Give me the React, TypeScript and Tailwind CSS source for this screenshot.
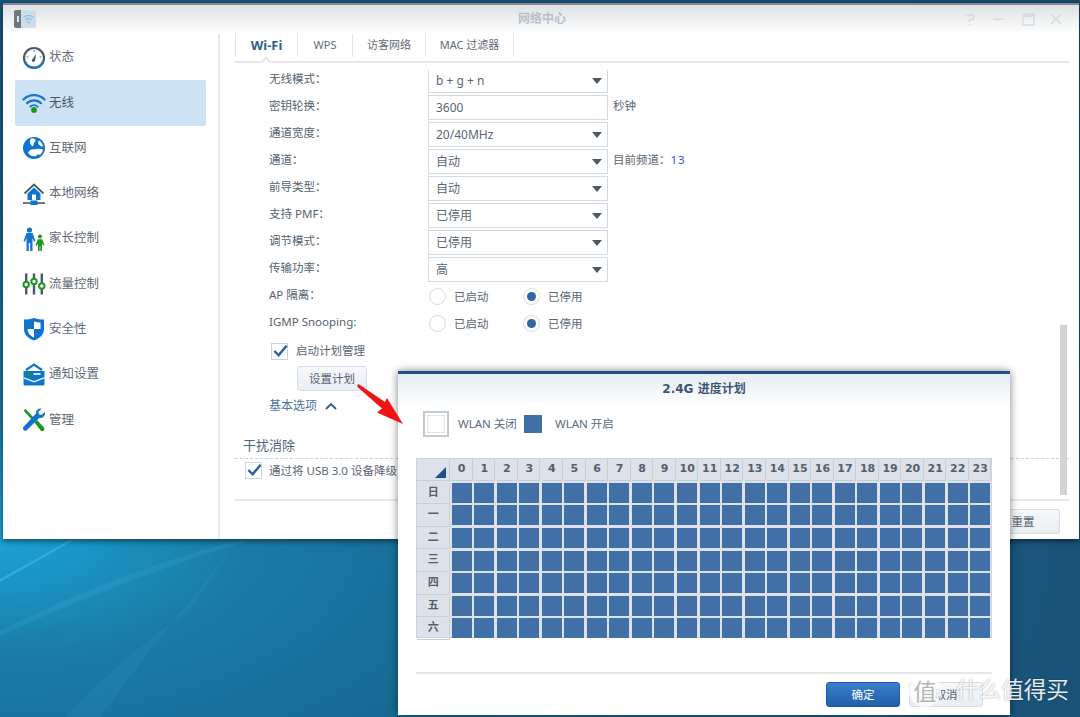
import React from 'react'

const hours = Array.from({ length: 24 }, (_, i) => i)
const days = ['日', '一', '二', '三', '四', '五', '六']

const StatusIcon = () => (
  <svg viewBox="0 0 24 24" className="w-[24px] h-[24px]">
    <circle cx="12" cy="12" r="10" fill="#fff" stroke="#4b5966" strokeWidth="2.2" />
    <path d="M3 16a10 10 0 0 0 18 0" fill="none" stroke="#1b76c9" strokeWidth="2.2" />
    <path d="M9.6 14.6 14 7.8l-1 7.2a1.9 1.9 0 0 1-3.4-.4z" fill="#4b5966" />
    <circle cx="12" cy="5" r="1" fill="#9aa5b0" />
    <circle cx="5.5" cy="11" r="1" fill="#9aa5b0" />
    <circle cx="18.5" cy="11" r="1" fill="#9aa5b0" />
  </svg>
)

const WifiIcon = () => (
  <svg viewBox="0 0 24 24" className="w-[24px] h-[24px]">
    <path d="M1.5 8.5a15 15 0 0 1 21 0" fill="none" stroke="#1b76c9" strokeWidth="2.2" strokeLinecap="round" />
    <path d="M5 12.2a10 10 0 0 1 14 0" fill="none" stroke="#1b76c9" strokeWidth="2.2" strokeLinecap="round" />
    <path d="M8.4 15.6a5.2 5.2 0 0 1 7.2 0" fill="none" stroke="#1b76c9" strokeWidth="2" strokeLinecap="round" />
    <circle cx="12" cy="19" r="2.9" fill="#1f961f" />
  </svg>
)

const GlobeIcon = () => (
  <svg viewBox="0 0 24 24" className="w-[24px] h-[24px]">
    <circle cx="12" cy="12" r="11" fill="#0f74cc" />
    <path d="M9 2.500c2-.3 4 0 4.500 1.200.5 1.300-1 2-1.500 3.300-.4 1.200-.3 3-1.500 3.300-1.100.200-1-1.500-2-2.300C7.500 7 7.800 4 9 2.500z" fill="#fff" />
    <path d="M16.500 4.500c2 .8 4 3 4.500 5.500-1 1-2.300.6-3-.5-.9-.8-2.500-1.300-1.500-5z" fill="#fff" />
    <path d="M6 17c1-3 4-4.500 6.500-3.500 1.500-1 5-1.300 8.500 0-.3 2.300-1.500 4-3 5.500-1.500-.8-3-.3-4 1-2.800 1-6-.5-8-3z" fill="#fff" />
  </svg>
)

const HomeIcon = () => (
  <svg viewBox="0 0 24 24" className="w-[24px] h-[24px]">
    <path d="M2.500 11.500 12 2.500l9.500 9" fill="none" stroke="#4b5966" strokeWidth="1.800" />
    <path d="M5.500 11.500 12 5.500l6.500 6V18h-13z" fill="#0f74cc" />
    <rect x="10" y="12.500" width="4" height="5.500" fill="#fff" />
    <rect x="1" y="20.300" width="22" height="1.500" fill="#3f4d5a" />
    <rect x="8.500" y="18.500" width="7" height="4.500" fill="#0f74cc" />
  </svg>
)

const FamilyIcon = () => (
  <svg viewBox="0 0 24 24" className="w-[24px] h-[24px]">
    <circle cx="7.500" cy="3" r="2.600" fill="#0f74cc" />
    <path d="M4.500 6h6l3 8-1.500.7-1.500-4V24H8.200v-8H6.800v8H4.500V10.700L3 14.700 1.500 14z" fill="#0f74cc" />
    <circle cx="18" cy="9.500" r="2" fill="#1f961f" />
    <path d="M15.800 12.200h4.400l2.300 5.800-1.300.5-1.200-2.500V24h-1.700v-5h-.6v5H16v-7.500l-1.200 2.500-1.300-.5z" fill="#1f961f" />
  </svg>
)

const TrafficIcon = () => (
  <svg viewBox="0 0 24 24" className="w-[24px] h-[24px]">
    <rect x="3" y="1.500" width="2.400" height="21" fill="#4b5966" />
    <rect x="10.800" y="1.500" width="2.400" height="21" fill="#4b5966" />
    <rect x="18.600" y="1.500" width="2.400" height="21" fill="#4b5966" />
    <circle cx="4.200" cy="12.500" r="2.700" fill="#fff" stroke="#1f961f" strokeWidth="2" />
    <circle cx="12" cy="9.500" r="2.700" fill="#fff" stroke="#1f961f" strokeWidth="2" />
    <circle cx="19.800" cy="14" r="2.700" fill="#fff" stroke="#1f961f" strokeWidth="2" />
  </svg>
)

const ShieldIcon = () => (
  <svg viewBox="0 0 24 24" className="w-[24px] h-[24px]">
    <path d="M2 2.500c3.500 0 6.500-.5 10-1.500 3.500 1 6.500 1.500 10 1.500V12c0 6-4.500 9.500-10 11.500C6.500 21.500 2 18 2 12z" fill="#0f74cc" />
    <path d="M12 4.500c2.300.6 4.300 1 6.500 1V12H12zM12 12v8.500C9 19 5.700 16.500 5.500 12z" fill="#fff" />
  </svg>
)

const NotifyIcon = () => (
  <svg viewBox="0 0 24 24" className="w-[24px] h-[24px]">
    <path d="M4 7 12 1.500 20 7" fill="none" stroke="#0f74cc" strokeWidth="2.200" />
    <path d="M1.500 8h21v13a1.500 1.500 0 0 1-1.500 1.500H3A1.500 1.500 0 0 1 1.500 21z" fill="#0f74cc" />
    <path d="M1.500 15.500 12 19.500l10.500-4V14l-10.500 4-10.500-4z" fill="#fff" opacity=".9" />
    <rect x="5.500" y="9.800" width="4.500" height="2.400" fill="#1f961f" />
    <rect x="11.500" y="10.200" width="7" height="1.600" fill="#fff" />
  </svg>
)

const AdminIcon = () => (
  <svg viewBox="0 0 24 24" className="w-[24px] h-[24px]">
    <path d="M1.500 2.500 3.500 1l9.500 10-2 2z" fill="#1f961f" />
    <path d="M12.500 14.500 15 12l7 7.500a2.300 2.300 0 0 1-3.200 3.200z" fill="#1f961f" />
    <path d="M22.800 3.800 19.600 7l-2.600-.6-.6-2.600L19.600.7c-2.800-.8-6 1.300-5.600 4.900L1.700 18.800a2.300 2.300 0 0 0 3.300 3.300L17.500 9.800c3.500.8 6.300-2.800 5.300-6z" fill="#0f74cc" />
  </svg>
)

const menu = [
  { label: '状态', icon: <StatusIcon /> },
  { label: '无线', icon: <WifiIcon />, active: true },
  { label: '互联网', icon: <GlobeIcon /> },
  { label: '本地网络', icon: <HomeIcon /> },
  { label: '家长控制', icon: <FamilyIcon /> },
  { label: '流量控制', icon: <TrafficIcon /> },
  { label: '安全性', icon: <ShieldIcon /> },
  { label: '通知设置', icon: <NotifyIcon /> },
  { label: '管理', icon: <AdminIcon /> },
]

const Label = ({ children }: { children: React.ReactNode }) => (
  <div className="w-[193px] pl-[34px] pb-[3px] text-[11.5px] text-[#56626e] whitespace-nowrap">{children}</div>
)

const SelectRow = ({ label, value, note, input }: { label: string; value: string; note?: React.ReactNode; input?: boolean }) => (
  <div className="flex items-center h-[27px]">
    <Label>{label}</Label>
    <div className="w-[180px] h-[25px] border-[1.5px] border-[#d3dae3] bg-white flex items-center justify-between pl-[7px] pr-[5px]">
      <span className="text-[12px] text-[#5a6672]">{value}</span>
      {!input && (
        <svg viewBox="0 0 10 6" className="w-[10px] h-[6px]">
          <path d="M0 0h10L5 6z" fill="#4d5965" />
        </svg>
      )}
    </div>
    {note}
  </div>
)

const Radio = ({ on, label, className }: { on?: boolean; label: string; className: string }) => (
  <div className={`flex items-center ${className}`}>
    <span className="w-[17px] h-[17px] rounded-full border-[1.5px] border-[#d3dae3] bg-white flex items-center justify-center">
      {on && <span className="w-[9px] h-[9px] rounded-full bg-[#2f66a6]" />}
    </span>
    <span className="ml-[8px] text-[11.5px] text-[#5a6672]">{label}</span>
  </div>
)

const RadioRow = ({ label }: { label: string }) => (
  <div className="flex items-center h-[27px]">
    <Label>{label}</Label>
    <Radio label="已启动" className="w-[95px] pl-[1px]" />
    <Radio on label="已停用" className="" />
  </div>
)

const Check = () => (
  <span className="w-[17px] h-[17px] border-[1.5px] border-[#ccd3dc] bg-white relative shrink-0">
    <svg viewBox="0 0 18 16" className="absolute left-[0px] top-[-1px] w-[17px] h-[16px]">
      <path d="M2.500 8 7 12.500 15.500 2.500" fill="none" stroke="#2b5f9e" strokeWidth="2.600" />
    </svg>
  </span>
)

const App = () => {
  return (
    <div className="relative w-[1080px] h-[717px] overflow-hidden bg-[radial-gradient(ellipse_at_0%_75%,#1aa3d6_0%,#1a7ba6_16%,#17648e_40%,#1a4e74_80%,#1a4a6c_100%)] font-['Noto_Sans','Noto_Sans_CJK_SC',sans-serif]">
      {/* wallpaper light beams */}
      <svg viewBox="0 0 1080 717" className="absolute left-0 top-0 w-[1080px] h-[717px]">
        <path d="M0 579 70 540H74L0 582z" fill="#43c4f0" opacity=".5" />
        <path d="M0 631Q120 570 240 540L250 540Q120 580 0 636z" fill="#49b4dc" opacity=".18" />
        <path d="M0 690Q60 640 90 615L0 640z" fill="#1a7aa8" opacity=".18" />
        <path d="M65 717Q130 650 190 610 210 580 235 545L150 650 100 717z" fill="#3da6d6" opacity=".14" />
      </svg>

      {/* main window */}
      <div className="absolute left-[3px] top-[3px] w-[1076px] h-[536px] bg-white border-t-2 border-[#7f8a92] shadow-[0_2px_6px_rgba(0,0,0,0.55)] flex flex-col">
        <div className="relative h-[29px] shrink-0 bg-gradient-to-b from-[#dee1e5] to-white">
          <div className="absolute left-[11px] top-[5px] w-[22px] h-[18px] flex rounded-[2px] overflow-hidden">
            <div className="w-[7px] bg-[#70787f] flex items-center justify-center">
              <span className="w-[2px] h-[6px] bg-[#cfe6f8]" />
            </div>
            <div className="flex-1 bg-[#ccdde8] flex items-center justify-center">
              <svg viewBox="0 0 14 12" className="w-[13px] h-[11px]">
                <path d="M1 4a9 9 0 0 1 12 0M3.500 6.500a5.500 5.500 0 0 1 7 0" fill="none" stroke="#7cc0f0" strokeWidth="1.200" />
                <circle cx="7" cy="9" r="1.200" fill="#7cc0f0" />
              </svg>
            </div>
          </div>
          <div className="absolute left-[515px] top-[5px] text-[12px] font-bold text-[#b9bfc6]">网络中心</div>
          <svg viewBox="0 0 100 16" className="absolute left-[961px] top-[7px] w-[100px] h-[16px]">
            <path d="M1 3h8.500v4.500H5.500V10" fill="none" stroke="#d8dbde" strokeWidth="1.500" />
            <rect x="4.800" y="12" width="1.500" height="1.500" fill="#d8dbde" />
            <rect x="29" y="6.500" width="11" height="1.500" fill="#d8dbde" />
            <path d="M59 2h11v11H59z" fill="none" stroke="#d8dbde" strokeWidth="1.500" />
            <rect x="59" y="2" width="11" height="3" fill="#d8dbde" />
            <path d="M87 2l10 10M97 2 87 12" fill="none" stroke="#d8dbde" strokeWidth="1.500" />
          </svg>
        </div>

        <div className="flex flex-1 min-h-0">
          {/* sidebar */}
          <div className="w-[217px] shrink-0 border-r-2 border-[#e8e8e8] pl-[12px] pt-[1px]">
            {menu.map((m) => (
              <div
                key={m.label}
                className={`w-[191px] h-[45.300px] flex items-center pl-[7px] gap-[3px] rounded-[2px] ${m.active ? 'bg-[#cce2f5] text-[#44566a]' : 'text-[#5f6a75]'}`}
              >
                {m.icon}
                <span className="text-[12.500px] whitespace-nowrap">{m.label}</span>
              </div>
            ))}
          </div>

          {/* right panel */}
          <div className="relative flex-1 min-w-0 pl-[15px] pr-[10px] flex flex-col">
            <div className="relative h-[29px] shrink-0 border-b-2 border-[#e6e6e6] flex items-start">
              <div className="w-[62px] h-[23px] border-l border-[#dfe4ea] text-center text-[13px] font-bold text-[#2f5c8d] leading-[22px]">Wi-Fi</div>
              <div className="w-[55px] h-[23px] border-l border-[#dfe4ea] text-center text-[11px] text-[#5f6a75] leading-[22px]">WPS</div>
              <div className="w-[73px] h-[23px] border-l border-[#dfe4ea] text-center text-[11px] text-[#5f6a75] leading-[22px]">访客网络</div>
              <div className="w-[89px] h-[23px] border-x border-[#dfe4ea] text-center text-[11px] text-[#5f6a75] leading-[22px]">MAC 过滤器</div>
              <span className="absolute left-[27px] bottom-[-5px] w-[8px] h-[8px] rotate-45 bg-white border-l-2 border-t-2 border-[#e6e6e6]" />
            </div>

            <div className="relative flex-1 min-h-0 mt-[7px] overflow-hidden">
              <div className="-mt-[3px]">
                <SelectRow label="无线模式：" value="b + g + n" />
                <SelectRow
                  input
                  label="密钥轮换："
                  value="3600"
                  note={<span className="ml-[5px] pb-[4px] text-[11.500px] text-[#5a6672]">秒钟</span>}
                />
                <SelectRow label="通道宽度：" value="20/40MHz" />
                <SelectRow
                  label="通道："
                  value="自动"
                  note={
                    <span className="ml-[5px] pb-[4px] text-[11.500px] text-[#5a6672]">
                      目前频道：<span className="tracking-[1px] text-[#3a50e6]">13</span>
                    </span>
                  }
                />
                <SelectRow label="前导类型：" value="自动" />
                <SelectRow label="支持 PMF：" value="已停用" />
                <SelectRow label="调节模式：" value="已停用" />
                <SelectRow label="传输功率：" value="高" />
                <RadioRow label="AP 隔离：" />
                <RadioRow label="IGMP Snooping:" />

                <div className="flex items-center h-[24px] mt-[2px] pl-[36px] gap-[8px] text-[11.500px] text-[#5a6672]">
                  <Check />
                  <span>启动计划管理</span>
                </div>
                <button className="block mt-[3px] ml-[62px] w-[70px] h-[25px] rounded-[3px] border border-[#d5dce4] bg-gradient-to-b from-[#f6f8fa] to-[#e9eef3] text-[11.500px] text-[#56626e]">
                  设置计划
                </button>
                <div className="flex items-center h-[20px] mt-[5px] pl-[34px] gap-[8px] text-[12px] text-[#4f7399]">
                  <span>基本选项</span>
                  <svg viewBox="0 0 12 8" className="w-[12px] h-[8px]">
                    <path d="M1 7l5-5 5 5" fill="none" stroke="#2f5c8d" strokeWidth="1.800" />
                  </svg>
                </div>
                <div className="h-[20px] mt-[19px] pl-[8px] text-[13px] text-[#4f6479] leading-[20px]">干扰消除</div>
                <div className="mt-[3px] border-t border-dashed border-[#c8d0da]" />
                <div className="flex items-center h-[23px] pl-[10px] gap-[7px] text-[11.500px] text-[#5a6672]">
                  <Check />
                  <span className="whitespace-nowrap">通过将 USB 3.0 设备降级</span>
                </div>
              </div>
              <div className="absolute right-[2px] top-[255px] w-[7px] h-[170px] bg-[#d3d3d3]" />
            </div>

            <div className="h-[40px] shrink-0 border-t-2 border-[#e8e8e8] flex justify-end pr-[9px] pt-[8px]">
              <button className="w-[74px] h-[25px] rounded-[3px] border border-[#d5dce4] bg-gradient-to-b from-[#f6f8fa] to-[#e9eef3] text-[11.500px] text-[#56626e]">
                重置
              </button>
            </div>
          </div>
        </div>
      </div>

      {/* schedule dialog */}
      <div className="absolute left-[398px] top-[371px] w-[612px] h-[344px] bg-white border-t-[3px] border-[#1f4f86] shadow-[0_0_8px_rgba(0,0,0,0.5)] flex flex-col">
        <div className="h-[32px] shrink-0 bg-gradient-to-b from-[#e6ebf2] to-white text-center text-[12px] font-bold text-[#3c5774] leading-[31px] font-['DejaVu_Sans','Noto_Sans_CJK_SC',sans-serif]">
          2.4G 进度计划
        </div>
        <div className="flex items-center h-[30px] mt-[3px] pl-[25px] text-[11.500px] text-[#5a6a7a]">
          <span className="w-[26px] h-[26px] border-2 border-[#c3c9d0] p-[2px]">
            <span className="block w-full h-full border border-[#dde2e8]" />
          </span>
          <span className="ml-[9px] w-[66px]">WLAN 关闭</span>
          <span className="w-[18px] h-[18px] bg-[#4070a6]" />
          <span className="ml-[13px]">WLAN 开启</span>
        </div>
        <div className="ml-[18px] mt-[19px] w-[576px] h-[180px] bg-[#dde2ea] border border-[#cdd4df] grid grid-cols-[32px_repeat(24,20px)] grid-rows-[21px_repeat(7,20px)] gap-x-[2.550px] gap-y-[2.650px] font-['DejaVu_Sans','Noto_Sans_CJK_SC',sans-serif] text-[11px] font-bold text-[#54606c]">
          <div className="relative border-r border-b border-[#c7cfda] -mr-[1.300px] -mb-[1.300px]">
            <svg viewBox="0 0 12 12" className="absolute right-[3px] bottom-[2px] w-[11px] h-[11px]">
              <path d="M12 0v12H0z" fill="#1f4f86" />
            </svg>
          </div>
          {hours.map((h) => (
            <div key={h} className="border-r border-b border-[#c7cfda] -mr-[1.300px] -mb-[1.300px] flex items-center justify-center">{h}</div>
          ))}
          {days.map((d) => (
            <React.Fragment key={d}>
              <div className="border-r border-b border-[#c7cfda] -mr-[1.300px] -mb-[1.300px] flex items-center justify-center">{d}</div>
              {hours.map((h) => (
                <div key={h} className="bg-[#4070a6]" />
              ))}
            </React.Fragment>
          ))}
        </div>
        <div className="ml-[18px] mt-[34px] w-[576px] border-t-2 border-[#e6e6e6]" />
        <div className="flex justify-end gap-[9px] pr-[27px] pt-[8px]">
          <button className="w-[74px] h-[25px] rounded-[3px] border border-[#1f5aa0] bg-gradient-to-b from-[#3c7fcb] to-[#2060ab] text-[11.500px] text-white">
            确定
          </button>
          <button className="w-[74px] h-[25px] rounded-[3px] border border-[#d5dce4] bg-gradient-to-b from-[#f6f8fa] to-[#e9eef3] text-[11.500px] text-[#56626e]">
            取消
          </button>
        </div>
      </div>

      {/* red pointer */}
      <svg viewBox="0 0 60 50" className="absolute left-[350px] top-[380px] w-[60px] h-[50px]">
        <path d="M7 6.500 8.500 4 35 22l2-4 16 26-26-11.500 5-4z" fill="#f01414" />
      </svg>

      {/* site watermark */}
      <div className="absolute left-[909px] top-[675px] w-[32px] h-[32px] rounded-full bg-white/80 flex items-center justify-center text-[23px] text-[#b5b5b5]">
        值
      </div>
      <div className="absolute left-[956px] top-[675px] text-[22.600px] leading-[30px] text-white/90 whitespace-nowrap [text-shadow:0_0_2px_rgba(0,0,0,0.4)]">
        什么值得买
      </div>
    </div>
  )
}

export default App
